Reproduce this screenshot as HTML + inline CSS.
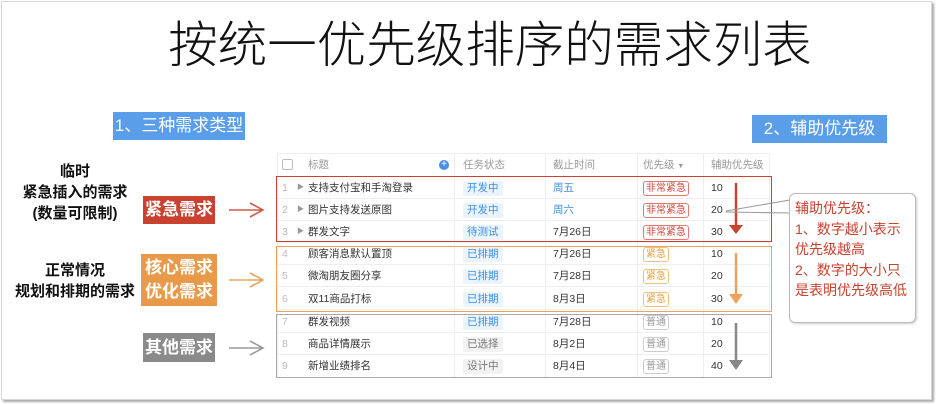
<!DOCTYPE html>
<html><head><meta charset="utf-8"><style>
*{margin:0;padding:0;box-sizing:border-box}
body{width:936px;height:404px;background:#fff;position:relative;overflow:hidden;font-family:"Liberation Sans","Noto Sans CJK SC",sans-serif;color:#222}
.a{position:absolute}
.frame{left:1px;top:1px;width:931px;height:399px;border:1px solid #d8d8d8;box-shadow:2px 2px 2px #aaa}
.title{left:22px;width:936px;top:17px;text-align:center;font-size:49.5px;line-height:58px;color:#111;font-weight:300}
.blue{background:#5a9de8;color:#fff;font-size:17px;line-height:28px;text-align:center}
.lbl{font-size:15px;font-weight:bold;color:#111;text-align:center;line-height:21px}
.tag{color:#fff;font-size:17px;text-align:center;font-weight:bold}
.row{position:absolute;left:277px;width:493px;height:22px;border-bottom:1px solid #eee;font-size:10.5px;color:#333}
.row span{position:absolute;top:0;line-height:22px}
.num{left:5px;color:#bbb}
.tri{left:20px;color:#999;font-size:7px}
.st{left:186px;top:4px!important;height:15px;line-height:15px!important;padding:0 4px;background:#eaf4fd;color:#3d8fe0;border-radius:2px}
.st.g{background:#f2f2f2;color:#777}
.pr{left:366px;top:4px!important;height:15px;line-height:13px!important;padding:0 2px;border:1px solid;border-radius:3px;font-size:10px}
.vl{position:absolute;top:153px;height:225px;width:1px;background:#eee}
</style></head><body>
<div class="a frame"></div>
<div class="a title">按统一优先级排序的需求列表</div>
<div class="a blue" style="left:113px;top:112px;width:132px">1、三种需求类型</div>
<div class="a blue" style="left:752px;top:115px;width:135px">2、辅助优先级</div>

<div class="a lbl" style="left:0;width:150px;top:161px">临时<br>紧急插入的需求<br>(数量可限制)</div>
<div class="a lbl" style="left:0;width:150px;top:260px">正常情况<br>规划和排期的需求</div>

<div class="a tag" style="left:143px;top:196px;width:72px;height:28px;line-height:28px;background:#c9412f">紧急需求</div>
<div class="a tag" style="left:141px;top:254px;width:76px;height:52px;line-height:24px;padding-top:2px;background:#e89a4a">核心需求<br>优化需求</div>
<div class="a tag" style="left:143px;top:333px;width:72px;height:29px;line-height:29px;background:#8a8a8a">其他需求</div>

<svg class="a" style="left:0;top:0" width="936" height="404">
<g fill="none" stroke-width="1.6">
<path d="M229 210H262M250 203L263 210L250 217" stroke="#d05a45"/>
<path d="M229 280H262M250 273L263 280L250 287" stroke="#eba35c"/>
<path d="M229 348H262M250 341L263 348L250 355" stroke="#999"/>
</g>
</svg>

<div class="a" style="left:277px;top:153px;width:493px;height:225px;border:1px solid #eee"></div>
<div class="vl" style="left:454px"></div><div class="vl" style="left:545px"></div><div class="vl" style="left:637px"></div><div class="vl" style="left:703px"></div>
<div class="row" style="top:153px;height:24px;color:#999">
<span style="left:5px;top:6px;width:11px;height:11px;border:1px solid #bbb;border-radius:2px"></span>
<span style="left:31px;line-height:24px">标题</span>
<span style="left:162px;top:7px;width:10px;height:10px;border-radius:50%;background:#4a90e2;color:#fff;font-size:10px;line-height:10px;text-align:center">+</span>
<span style="left:186px;line-height:24px">任务状态</span>
<span style="left:276px;line-height:24px">截止时间</span>
<span style="left:366px;line-height:24px">优先级 <small style="font-size:7px">▼</small></span>
<span style="left:434px;line-height:24px">辅助优先级</span>
</div>
<div class="row" style="top:177px"><span class="num">1</span><span class="tri">▶</span><span style="left:31px">支持支付宝和手淘登录</span><span class="st">开发中</span><span style="left:276px;color:#3d8fe0">周五</span><span class="pr" style="color:#d0453a;border-color:#e07a70">非常紧急</span><span style="left:434px">10</span></div>
<div class="row" style="top:199px"><span class="num">2</span><span class="tri">▶</span><span style="left:31px">图片支持发送原图</span><span class="st">开发中</span><span style="left:276px;color:#3d8fe0">周六</span><span class="pr" style="color:#d0453a;border-color:#e07a70">非常紧急</span><span style="left:434px">20</span></div>
<div class="row" style="top:221px"><span class="num">3</span><span class="tri">▶</span><span style="left:31px">群发文字</span><span class="st">待测试</span><span style="left:276px">7月26日</span><span class="pr" style="color:#d0453a;border-color:#e07a70">非常紧急</span><span style="left:434px">30</span></div>
<div class="row" style="top:243px"><span class="num">4</span><span style="left:31px">顾客消息默认置顶</span><span class="st">已排期</span><span style="left:276px">7月26日</span><span class="pr" style="color:#e8a040;border-color:#f0c080">紧急</span><span style="left:434px">10</span></div>
<div class="row" style="top:265px"><span class="num">5</span><span style="left:31px">微淘朋友圈分享</span><span class="st">已排期</span><span style="left:276px">7月28日</span><span class="pr" style="color:#e8a040;border-color:#f0c080">紧急</span><span style="left:434px">20</span></div>
<div class="row" style="top:288px"><span class="num">6</span><span style="left:31px">双11商品打标</span><span class="st">已排期</span><span style="left:276px">8月3日</span><span class="pr" style="color:#e8a040;border-color:#f0c080">紧急</span><span style="left:434px">30</span></div>
<div class="row" style="top:311px"><span class="num">7</span><span style="left:31px">群发视频</span><span class="st">已排期</span><span style="left:276px">7月28日</span><span class="pr" style="color:#999;border-color:#ccc">普通</span><span style="left:434px">10</span></div>
<div class="row" style="top:333px"><span class="num">8</span><span style="left:31px">商品详情展示</span><span class="st g">已选择</span><span style="left:276px">8月2日</span><span class="pr" style="color:#999;border-color:#ccc">普通</span><span style="left:434px">20</span></div>
<div class="row" style="top:355px;border:0"><span class="num">9</span><span style="left:31px">新增业绩排名</span><span class="st g">设计中</span><span style="left:276px">8月4日</span><span class="pr" style="color:#999;border-color:#ccc">普通</span><span style="left:434px">40</span></div>

<div class="a" style="left:276px;top:176px;width:496px;height:66px;border:1.5px solid #c9412f"></div>
<div class="a" style="left:276px;top:246px;width:496px;height:66px;border:1.5px solid #eba35c"></div>
<div class="a" style="left:276px;top:314px;width:496px;height:64px;border:1.5px solid #aaa"></div>

<svg class="a" style="left:0;top:0" width="936" height="404">
<path d="M736 183V225" stroke="#c9412f" stroke-width="2.5"/><path d="M729 225H743L736 234Z" fill="#c9412f"/>
<path d="M736 253V294" stroke="#eba35c" stroke-width="2.5"/><path d="M729 294H743L736 304Z" fill="#eba35c"/>
<path d="M736 323V360" stroke="#888" stroke-width="2.5"/><path d="M729 360H743L736 370Z" fill="#888"/>
<path d="M726 211L790 200M790 213L726 212" stroke="#999" stroke-width="1" fill="none"/>
</svg>

<div class="a" style="left:789px;top:193px;width:127px;height:130px;border:1px solid #bbb;border-radius:6px;background:#fff;box-shadow:1px 1px 2px #ccc;padding:4px 0 0 5px;color:#c9412f;font-size:14px;line-height:20.5px;font-family:'Liberation Sans','WenQuanYi Zen Hei',sans-serif">辅助优先级：<br>1、数字越小表示<br>优先级越高<br>2、数字的大小只<br>是表明优先级高低</div>
</body></html>
